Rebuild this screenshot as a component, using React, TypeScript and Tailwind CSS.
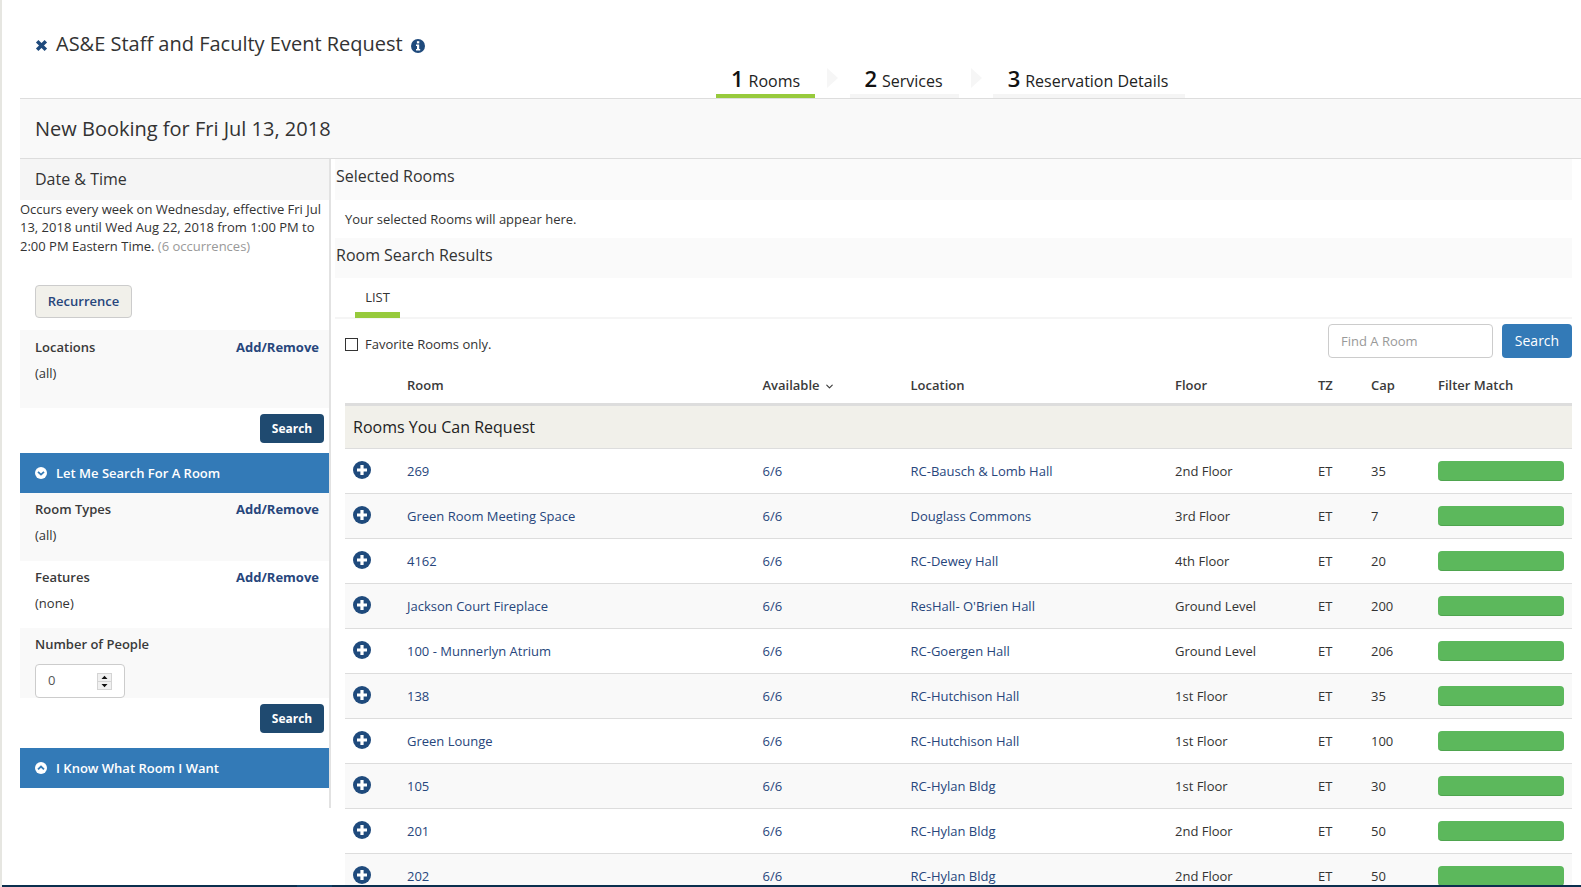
import { ChevronDown } from 'lucide-react';

const font = "font-['Open_Sans',sans-serif]";

const rooms = [
  ['269', 'RC-Bausch & Lomb Hall', '2nd Floor', '35'],
  ['Green Room Meeting Space', 'Douglass Commons', '3rd Floor', '7'],
  ['4162', 'RC-Dewey Hall', '4th Floor', '20'],
  ['Jackson Court Fireplace', "ResHall- O'Brien Hall", 'Ground Level', '200'],
  ['100 - Munnerlyn Atrium', 'RC-Goergen Hall', 'Ground Level', '206'],
  ['138', 'RC-Hutchison Hall', '1st Floor', '35'],
  ['Green Lounge', 'RC-Hutchison Hall', '1st Floor', '100'],
  ['105', 'RC-Hylan Bldg', '1st Floor', '30'],
  ['201', 'RC-Hylan Bldg', '2nd Floor', '50'],
  ['202', 'RC-Hylan Bldg', '2nd Floor', '50'],
];

const cols = 'grid grid-cols-[62px_355.5px_148px_264.5px_143px_53px_67px_134px] items-center';

function PlusCircle() {
  return (
    <svg viewBox="0 0 18 18" className="h-[18px] w-[18px]">
      <circle cx="9" cy="9" r="9" fill="#1f4a7c" />
      <path d="M9 4v10M4 9h10" stroke="#fff" strokeWidth="3.2" />
    </svg>
  );
}

function RoundChevron({ up }: { up?: boolean }) {
  return (
    <svg viewBox="0 0 12 12" className="h-3 w-3">
      <circle cx="6" cy="6" r="6" fill="#fff" />
      <path d={up ? 'M3 7.4 6 4.6l3 2.8' : 'M3 4.8l3 2.8 3-2.8'} fill="none" stroke="#337ab7" strokeWidth="1.8" />
    </svg>
  );
}

function Step({ n, label, active }: { n: string; label: string; active?: boolean }) {
  return (
    <div className={`flex h-[34px] items-end justify-center border-b-4 ${active ? 'border-[#97ca3c]' : 'border-[#f5f5f5] pr-[2px]'}`}>
      <span className="text-[16px] leading-[26px] text-[#222]">
        <span className="mr-[5px] text-[22px] font-semibold text-[#111]">{n}</span>
        {label}
      </span>
    </div>
  );
}

function Arrow() {
  return <div className="mt-[4px] h-0 w-0 border-y-[10px] border-l-[11px] border-y-transparent border-l-[#f6f6f6]" />;
}

function Filter({ title, value, className = '' }: { title: string; value: string; className?: string }) {
  return (
    <div className={`pl-[15px] pr-[10px] ${className}`}>
      <div className="flex justify-between text-[13px] font-semibold leading-[18px] text-[#3a3a3a]">
        <span>{title}</span>
        <span className="font-bold text-[#27467c]">Add/Remove</span>
      </div>
      <div className="mt-[8px] text-[13px] leading-[18px] text-[#333]">{value}</div>
    </div>
  );
}

function SearchBtn() {
  return (
    <div className="flex justify-end pr-[5px]">
      <button className="h-[29px] w-[64px] rounded-[4px] bg-[#1f4a70] text-[12px] font-bold text-white">Search</button>
    </div>
  );
}

function BlueBar({ label, up }: { label: string; up?: boolean }) {
  return (
    <div className="flex h-[40px] items-center gap-[9px] bg-[#337ab7] pl-[15px] text-[13px] font-semibold text-white">
      <RoundChevron up={up} />
      <span className="pt-[1px]">{label}</span>
    </div>
  );
}

export default function App() {
  return (
    <div className={`${font} relative h-screen overflow-hidden border-l-2 border-[#e6e6e1] bg-white pl-[18px] text-[13px] text-[#333]`}>
      <div className="flex h-[99px] flex-col border-b border-[#dddddd]">
        <div className="flex items-center pl-[15px] pt-[30px]">
          <svg viewBox="0 0 12 12" className="mr-[8px] mt-[3px] h-[13px] w-[13px]">
            <path d="M2 2l8 8M10 2l-8 8" stroke="#1f4a7c" strokeWidth="3.2" />
          </svg>
          <span className="text-[20px] leading-[28px] text-[#333]">AS&amp;E Staff and Faculty Event Request</span>
          <svg viewBox="0 0 14 14" className="ml-[8px] mt-[3px] h-[14px] w-[14px]">
            <circle cx="7" cy="7" r="7" fill="#1f4a7c" />
            <rect x="5.9" y="2.2" width="2.4" height="2.2" fill="#fff" />
            <path d="M5 5.6h3.2v4.4h1v1.5H5V10h1V7.1H5z" fill="#fff" />
          </svg>
        </div>
        <div className="mt-auto flex pl-[696px]">
          <div className="w-[99px]"><Step n="1" label="Rooms" active /></div>
          <div className="flex w-[35px] justify-center pr-[1px]"><Arrow /></div>
          <div className="w-[109px]"><Step n="2" label="Services" /></div>
          <div className="flex w-[34px] justify-center"><Arrow /></div>
          <div className="w-[192px]"><Step n="3" label="Reservation Details" /></div>
        </div>
      </div>

      <div className="flex h-[60px] items-center border-b border-[#dddddd] bg-[#f9f9f9] pl-[15px] text-[20px] text-[#333]">
        New Booking for Fri Jul 13, 2018
      </div>

      <div className="flex">
        <aside className="h-[649px] w-[311px] shrink-0 border-r-2 border-[#e2e2e2]">
          <div className="flex h-[41px] items-center bg-[#f5f5f5] pb-[1px] pl-[15px] text-[16px] text-[#333]">Date &amp; Time</div>
          <p className="pr-[4px] text-[13px] leading-[18.4px] text-[#333]">
            Occurs every week on Wednesday, effective Fri Jul 13, 2018 until Wed Aug 22, 2018 from 1:00 PM to 2:00 PM Eastern Time.{' '}
            <span className="text-[#999]">(6 occurrences)</span>
          </p>
          <button className="ml-[15px] mt-[30px] h-[33px] w-[97px] rounded-[4px] border border-[#ccc] bg-[#f1f0ea] pt-[1px] text-[13px] font-semibold text-[#27467c]">
            Recurrence
          </button>
          <Filter title="Locations" value="(all)" className="mt-[12px] h-[78px] bg-[#f9f9f9] pt-[8px]" />
          <div className="mt-[6px]"><SearchBtn /></div>
          <div className="mt-[10px]"><BlueBar label="Let Me Search For A Room" /></div>
          <Filter title="Room Types" value="(all)" className="h-[68px] bg-[#f9f9f9] pt-[7px]" />
          <Filter title="Features" value="(none)" className="h-[67px] bg-white pt-[7px]" />
          <div className="h-[70px] bg-[#f9f9f9] pl-[15px] pt-[7px]">
            <div className="text-[13px] font-semibold leading-[18px] text-[#3a3a3a]">Number of People</div>
            <div className="mt-[11px] flex h-[34px] w-[90px] items-center justify-between rounded-[4px] border border-[#ccc] bg-white pl-[12px] pr-[12px] text-[#555]">
              <span>0</span>
              <svg viewBox="0 0 15 17" className="h-[17px] w-[15px]">
                <rect width="15" height="17" fill="#d4d4d4" />
                <rect x="1" y="1" width="13" height="7" fill="#f0f0f0" />
                <rect x="1" y="9" width="13" height="7" fill="#f0f0f0" />
                <path d="M7.5 2.8 4.5 6h6zM7.5 14.2l-3-3.2h6z" fill="#111" />
              </svg>
            </div>
          </div>
          <div className="mt-[6px]"><SearchBtn /></div>
          <div className="mt-[15px]"><BlueBar label="I Know What Room I Want" up /></div>
        </aside>

        <main className="w-[1241px] shrink-0 pl-[4px]">
          <div className="flex h-[41px] items-center bg-[#fafafa] pb-[7px] pl-[1px] text-[16px] text-[#333]">Selected Rooms</div>
          <div className="flex h-[38px] items-center pl-[10px] pt-[1px] text-[13px]">Your selected Rooms will appear here.</div>
          <div className="flex h-[40px] items-center bg-[#fafafa] pb-[6px] pl-[1px] text-[16px]">Room Search Results</div>

          <div className="border-b-2 border-[#f5f5f5] pl-[20px]">
            <div className="-mb-[1px] flex h-[40px] w-[45px] items-center justify-center border-b-[6px] border-[#97ca3c] pt-[5px] text-[13px] font-normal text-[#333]">
              LIST
            </div>
          </div>

          <div className="ml-[10px]">
            <div className="flex h-[44px] items-start justify-between pt-[5px]">
              <label className="mt-[3px] flex h-[34px] items-center gap-[7px] text-[13px] leading-[18px]">
                <span className="h-[13px] w-[13px] border border-[#333] bg-white" />
                Favorite Rooms only.
              </label>
              <div className="flex gap-[9px]">
                <input
                  placeholder="Find A Room"
                  className="h-[34px] w-[165px] rounded-[4px] border border-[#ccc] px-[12px] text-[13px] placeholder:text-[#999]"
                />
                <button className="h-[34px] w-[70px] rounded-[4px] bg-[#337ab7] pb-[1px] text-[14px] text-white">Search</button>
              </div>
            </div>

            <div className={`${cols} h-[43px] border-b-[3px] border-[#dddddd] pt-[6px] text-[13px] font-semibold text-[#3a3a3a]`}>
              <span />
              <span>Room</span>
              <span className="flex items-center gap-[4px]">Available <ChevronDown size={11} strokeWidth={2.5} /></span>
              <span>Location</span>
              <span>Floor</span>
              <span>TZ</span>
              <span>Cap</span>
              <span>Filter Match</span>
            </div>
            <div className="flex h-[43px] items-center border-b border-[#dddddd] bg-[#f1f0ea] pb-[1px] pl-[8px] text-[16px] text-[#222]">Rooms You Can Request</div>

            {rooms.map((r, i) => (
              <div key={i} className={`${cols} h-[45px] border-b border-[#dddddd] pt-[2px] ${i % 2 ? 'bg-[#f9f9f9]' : 'bg-white'}`}>
                <span className="pb-[4px] pl-[8px]"><PlusCircle /></span>
                <span className="text-[#27467c]">{r[0]}</span>
                <span className="text-[#27467c]">6/6</span>
                <span className="text-[#27467c]">{r[1]}</span>
                <span>{r[2]}</span>
                <span>ET</span>
                <span>{r[3]}</span>
                <span className="mb-[2px] block h-[20px] w-[126px] rounded-[4px] border-b border-[#4ea44e] bg-[#5cb85c]" />
              </div>
            ))}
          </div>
        </main>
      </div>

      <div className="absolute inset-x-0 bottom-0 h-[2px] bg-[#0b2f4e]">
        <div className="ml-[295px] h-full w-[35px] bg-[#0d4168]" />
      </div>
    </div>
  );
}
